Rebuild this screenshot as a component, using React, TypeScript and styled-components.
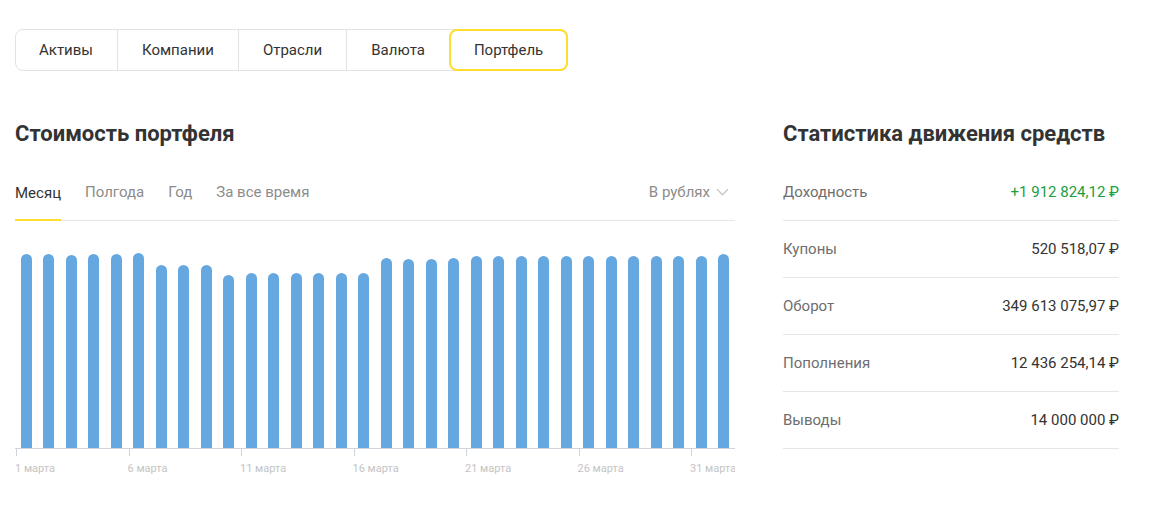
import * as React from "react"
import styled, {createGlobalStyle} from "styled-components"

const GlobalStyle = createGlobalStyle`
  body {
    margin: 0;
    background: #fff;
    font-family: Roboto, "Noto Sans", Arial, sans-serif;
    color: #333;
  }
`

const Page = styled.div`
  padding: 29px 15px 0;
`

const TabBar = styled.div`
  display: inline-flex;
  height: 42px;
  border: 1px solid #e2e2e2;
  border-radius: 8px;
  box-sizing: border-box;
`

const Tab = styled.div<{active?: boolean}>`
  display: flex;
  align-items: center;
  padding: 0 24px;
  font-size: 15px;
  color: #333;
  border-left: 1px solid ${p => (p.active ? "transparent" : "#e2e2e2")};
  &:first-child {
    border-left: none;
    padding-left: 23px;
  }
  ${p =>
    p.active &&
    `
    margin: -1px -1px -1px 0;
    padding: 0 23px;
    border: 2px solid #ffdd2d;
    border-radius: 8px;
  `}
`

const Columns = styled.div`
  display: flex;
  gap: 48px;
  margin-top: 50px;
`

const LeftCol = styled.div`
  width: 720px;
`

const RightCol = styled.div`
  width: 336px;
`

const Heading = styled.h2`
  margin: 0 0 17px;
  font-size: 22px;
  line-height: 26px;
  font-weight: 700;
  color: #333;
`

const PeriodBar = styled.div`
  display: flex;
  align-items: stretch;
  height: 57px;
  border-bottom: 1px solid #e6e6e6;
  box-sizing: border-box;
`

const Period = styled.div<{active?: boolean}>`
  display: flex;
  align-items: center;
  margin-right: 24px;
  font-size: 15px;
  color: ${p => (p.active ? "#333" : "#8c8c8c")};
  box-shadow: ${p => (p.active ? "inset 0 -2px 0 #ffdd2d" : "none")};
  margin-bottom: ${p => (p.active ? "-1px" : "0")};
`

const Currency = styled.div`
  margin-left: auto;
  display: flex;
  align-items: center;
  gap: 6px;
  font-size: 15px;
  color: #8c8c8c;
  padding-right: 6px;
`

const Plot = styled.div`
  display: flex;
  align-items: flex-end;
  height: 227px;
  border-bottom: 1px solid #cfd4da;
`

const Slot = styled.div`
  flex: 1;
  display: flex;
  justify-content: center;
`

const Bar = styled.div`
  width: 11px;
  background: #65a8e0;
  border-radius: 6px 6px 0 0;
`

const Axis = styled.div`
  display: flex;
  height: 30px;
  overflow: hidden;
`

const TickSlot = styled.div`
  flex: 1;
  position: relative;
`

const Tick = styled.div`
  position: absolute;
  left: 1px;
  top: 0;
  width: 1px;
  height: 7px;
  background: #cfd4da;
`

const TickLabel = styled.div`
  position: absolute;
  left: 0;
  top: 13px;
  font-size: 11px;
  color: #c4c4c4;
  white-space: nowrap;
`

const StatRow = styled.div`
  display: flex;
  justify-content: space-between;
  align-items: center;
  height: 57px;
  border-bottom: 1px solid #e6e6e6;
  box-sizing: border-box;
  font-size: 15px;
`

const StatLabel = styled.span`
  color: #6e6e6e;
`

const StatValue = styled.span<{positive?: boolean}>`
  color: ${p => (p.positive ? "#1a9e3e" : "#333")};
`

const tabs = ["Активы", "Компании", "Отрасли", "Валюта", "Портфель"]
const periods = ["Месяц", "Полгода", "Год", "За все время"]

const tops = [
  254, 254, 255, 254, 253.5, 253, 265, 265, 265, 275, 273, 273, 273, 273, 273, 273,
  258, 259, 259, 258, 256, 256, 256, 256, 256, 256, 256, 256, 256, 256, 256, 254,
]

const stats = [
  {label: "Доходность", value: "+1 912 824,12 ₽", positive: true},
  {label: "Купоны", value: "520 518,07 ₽"},
  {label: "Оборот", value: "349 613 075,97 ₽"},
  {label: "Пополнения", value: "12 436 254,14 ₽"},
  {label: "Выводы", value: "14 000 000 ₽"},
]

const Chevron = () => (
  <svg width="13" height="8" viewBox="0 0 13 8" fill="none">
    <path d="M1 1.2l5.5 5.5L12 1.2" stroke="#c8c8c8" strokeWidth="1.4" />
  </svg>
)

const App = () => (
  <Page>
    <GlobalStyle />
    <TabBar>
      {tabs.map(t => (
        <Tab key={t} active={t === "Портфель"}>
          {t}
        </Tab>
      ))}
    </TabBar>
    <Columns>
      <LeftCol>
        <Heading>Стоимость портфеля</Heading>
        <PeriodBar>
          {periods.map((p, i) => (
            <Period key={p} active={i === 0}>
              {p}
            </Period>
          ))}
          <Currency>
            В рублях <Chevron />
          </Currency>
        </PeriodBar>
        <Plot>
          {tops.map((t, i) => (
            <Slot key={i}>
              <Bar style={{height: 448 - t}} />
            </Slot>
          ))}
        </Plot>
        <Axis>
          {tops.map((_, i) => (
            <TickSlot key={i}>
              {i % 5 === 0 && (
                <>
                  <Tick />
                  <TickLabel>{i + 1} марта</TickLabel>
                </>
              )}
            </TickSlot>
          ))}
        </Axis>
      </LeftCol>
      <RightCol>
        <Heading>Статистика движения средств</Heading>
        {stats.map(s => (
          <StatRow key={s.label}>
            <StatLabel>{s.label}</StatLabel>
            <StatValue positive={s.positive}>{s.value}</StatValue>
          </StatRow>
        ))}
      </RightCol>
    </Columns>
  </Page>
)

export default App
